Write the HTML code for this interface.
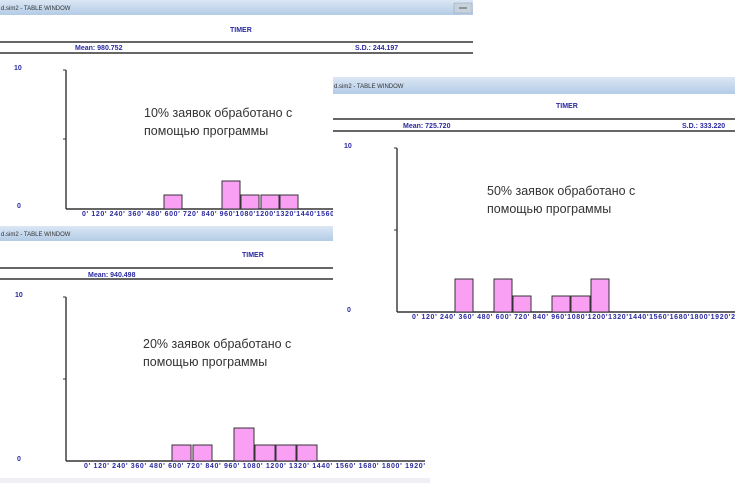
<!DOCTYPE html>
<html><head><meta charset="utf-8"><style>
html,body{margin:0;padding:0;background:#fff;width:735px;height:483px;overflow:hidden}
svg{display:block}
.t{font-family:"Liberation Sans",sans-serif;font-size:6px;fill:#333}
.b{font-family:"Liberation Sans",sans-serif;font-size:7px;font-weight:bold;fill:#2a2aa0}
.r{font-family:"Liberation Sans","DejaVu Sans",sans-serif;font-size:12.5px;fill:#333}
.bar{fill:#f9a0f4;stroke:#333;stroke-width:1}
</style></head><body>
<svg width="735" height="483" viewBox="0 0 735 483" xmlns="http://www.w3.org/2000/svg">
<defs><linearGradient id="tg" x1="0" y1="0" x2="0" y2="1"><stop offset="0" stop-color="#dbe7f5"/><stop offset="1" stop-color="#b3cbe6"/></linearGradient></defs>
<g>
<rect x="0" y="0" width="473" height="15" fill="url(#tg)"/>
<rect x="454" y="3" width="18" height="10" fill="#c8d2dc" stroke="#9aa8b8" stroke-width="0.6"/>
<line x1="459" y1="8" x2="467" y2="8" stroke="#555" stroke-width="1"/>
<text class="t" x="1" y="10">d.sim2 -  TABLE WINDOW</text>
<text class="b" x="230" y="32">TIMER</text>
<line x1="0" y1="42" x2="473" y2="42" stroke="#333" stroke-width="1.5"/>
<line x1="0" y1="53" x2="473" y2="53" stroke="#333" stroke-width="1.5"/>
<text class="b" x="75" y="50">Mean: 980.752</text>
<text class="b" x="355" y="50">S.D.: 244.197</text>
<text class="b" x="14" y="70">10</text>
<text class="b" x="17" y="208">0</text>
<line x1="66" y1="70" x2="66" y2="209" stroke="#333" stroke-width="1.4"/>
<line x1="63" y1="70" x2="66" y2="70" stroke="#333"/>
<line x1="63" y1="139" x2="66" y2="139" stroke="#333"/>
<line x1="66" y1="209" x2="333" y2="209" stroke="#333" stroke-width="1.4"/>
<rect class="bar" x="164" y="195" width="18" height="14"/>
<rect class="bar" x="222" y="181" width="18" height="28"/>
<rect class="bar" x="241" y="195" width="18" height="14"/>
<rect class="bar" x="261" y="195" width="18" height="14"/>
<rect class="bar" x="280" y="195" width="18" height="14"/>
<text class="b" x="82" y="216" textLength="252">0'  120'  240'  360'  480'  600'  720'  840'  960'1080'1200'1320'1440'1560</text>
<text class="r" x="144" y="117">10% заявок обработано с</text>
<text class="r" x="144" y="135">помощью программы</text>
</g>
<g>
<rect x="0" y="225" width="440" height="258" fill="#fff"/>
<rect x="0" y="226" width="334" height="15" fill="url(#tg)"/>
<rect x="0" y="478" width="430" height="5" fill="#eef0f3"/>
<text class="t" x="1" y="236">d.sim2 -  TABLE WINDOW</text>
<text class="b" x="242" y="257">TIMER</text>
<line x1="0" y1="268" x2="333" y2="268" stroke="#333" stroke-width="1.5"/>
<line x1="0" y1="279" x2="333" y2="279" stroke="#333" stroke-width="1.5"/>
<text class="b" x="88" y="277">Mean: 940.498</text>
<text class="b" x="15" y="297">10</text>
<text class="b" x="17" y="461">0</text>
<line x1="66" y1="297" x2="66" y2="461" stroke="#333" stroke-width="1.4"/>
<line x1="63" y1="297" x2="66" y2="297" stroke="#333"/>
<line x1="63" y1="379" x2="66" y2="379" stroke="#333"/>
<line x1="66" y1="461" x2="425" y2="461" stroke="#333" stroke-width="1.4"/>
<rect class="bar" x="172" y="445" width="19" height="16"/>
<rect class="bar" x="193" y="445" width="19" height="16"/>
<rect class="bar" x="234" y="428" width="20" height="33"/>
<rect class="bar" x="255" y="445" width="20" height="16"/>
<rect class="bar" x="276" y="445" width="20" height="16"/>
<rect class="bar" x="297" y="445" width="20" height="16"/>
<text class="b" x="84" y="468" textLength="341">0'  120'  240'  360'  480'  600'  720'  840'  960' 1080' 1200' 1320' 1440' 1560' 1680' 1800' 1920'</text>
<text class="r" x="143" y="348">20% заявок обработано с</text>
<text class="r" x="143" y="366">помощью программы</text>
</g>
<g>
<rect x="333" y="77" width="402" height="253" fill="#fff"/>
<rect x="333" y="77" width="402" height="17" fill="url(#tg)"/>
<text class="t" x="334" y="88">d.sim2 -  TABLE WINDOW</text>
<text class="b" x="556" y="108">TIMER</text>
<line x1="333" y1="119" x2="735" y2="119" stroke="#333" stroke-width="1.5"/>
<line x1="333" y1="131" x2="735" y2="131" stroke="#333" stroke-width="1.5"/>
<text class="b" x="403" y="128">Mean: 725.720</text>
<text class="b" x="682" y="128">S.D.: 333.220</text>
<text class="b" x="344" y="148">10</text>
<text class="b" x="347" y="312">0</text>
<line x1="397" y1="148" x2="397" y2="312" stroke="#333" stroke-width="1.4"/>
<line x1="394" y1="148" x2="397" y2="148" stroke="#333"/>
<line x1="394" y1="230" x2="397" y2="230" stroke="#333"/>
<line x1="397" y1="312" x2="735" y2="312" stroke="#333" stroke-width="1.4"/>
<rect class="bar" x="455" y="279" width="18" height="33"/>
<rect class="bar" x="494" y="279" width="18" height="33"/>
<rect class="bar" x="513" y="296" width="18" height="16"/>
<rect class="bar" x="552" y="296" width="18" height="16"/>
<rect class="bar" x="571" y="296" width="19" height="16"/>
<rect class="bar" x="591" y="279" width="18" height="33"/>
<text class="b" x="412" y="319" textLength="323">0'  120'  240'  360'  480'  600'  720'  840'  960'1080'1200'1320'1440'1560'1680'1800'1920'2</text>
<text class="r" x="487" y="195">50% заявок обработано с</text>
<text class="r" x="487" y="213">помощью программы</text>
</g>
</svg>
</body></html>
